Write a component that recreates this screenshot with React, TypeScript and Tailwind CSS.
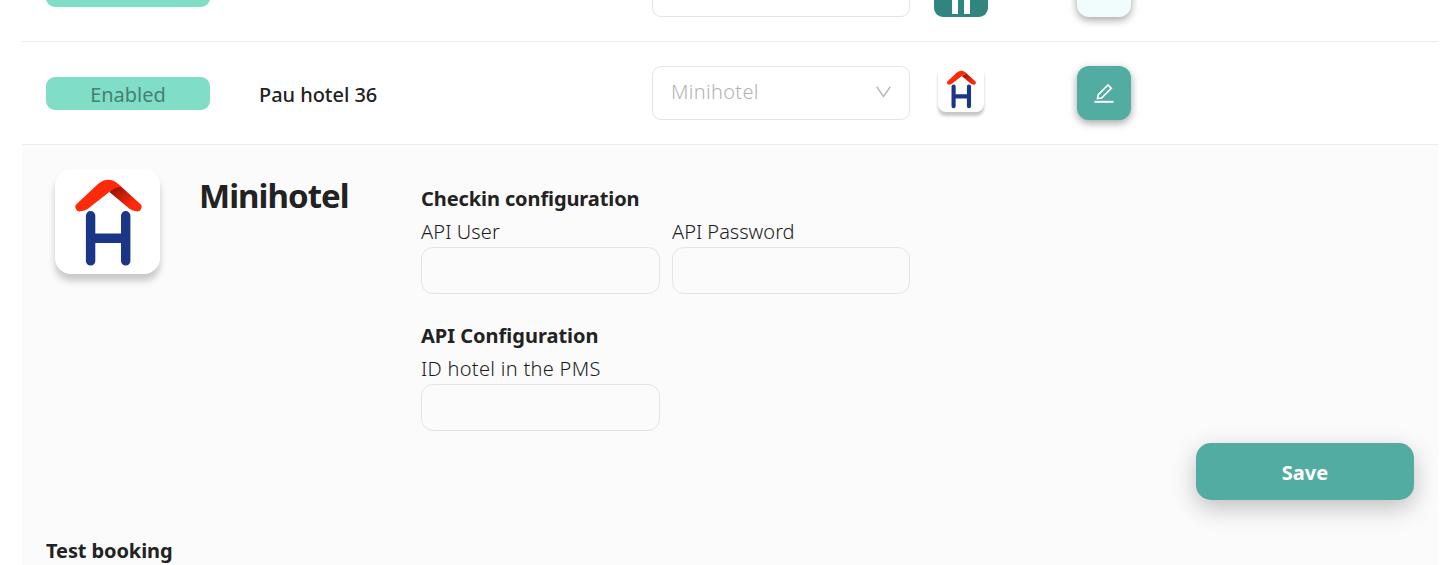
import type { ReactNode } from 'react';

function HotelLogo({ className }: { className: string }) {
  return (
    <svg viewBox="0 0 105 105" className={className} aria-hidden="true">
      <defs>
        <linearGradient id="roofFold" x1="0" y1="0" x2="1" y2="0.8">
          <stop offset="0.15" stopColor="#a11206" />
          <stop offset="0.8" stopColor="#ff2a0a" />
        </linearGradient>
      </defs>
      <path d="M54.300 23 Q58 18 66 17.500 L84.500 34.300 A4.400 4.400 0 0 1 80.500 42.100 Q77.500 42 74.500 39.800 Z" fill="url(#roofFold)" />
      <path d="M22.500 34.300 L43 15 Q54 6 64.500 16 L66.500 17.800 Q60 18 54.300 23 L32.500 40 Q29.500 42.100 26.500 42.100 A4.400 4.400 0 0 1 22.500 34.300 Z" fill="#ff2a0a" />
      <path d="M35.600 46.800 V91.900 M70.700 46.800 V91.900 M35.600 69.200 H70.700" fill="none" stroke="#1b3587" strokeWidth="9.400" strokeLinecap="round" />
    </svg>
  );
}

function Row({ children }: { children: ReactNode }) {
  return <div className="flex h-[103px] shrink-0 items-center border-b border-[#ededed] pl-6">{children}</div>;
}

function Field({ label, labelClass, width }: { label: string; labelClass: string; width: string }) {
  return (
    <label className={`block ${width}`}>
      <span className={`block h-8 whitespace-nowrap pt-px leading-8 font-[330] text-[#1c1c1c] ${labelClass}`}>{label}</span>
      <input className="block h-[47px] w-full rounded-[12px] border border-[#e4e4e4] bg-transparent px-3 outline-none" />
    </label>
  );
}

export default function App() {
  return (
    <main className="h-[565px] overflow-hidden bg-white pl-[22px] font-['Noto_Sans','Open_Sans',sans-serif] text-[20px] text-[#222]">
      <div className="flex h-full w-[1416px] flex-col">
        <div className="flex h-[42px] shrink-0 flex-col justify-end overflow-hidden">
          <Row>
            <div className="h-[33px] w-[164px] rounded-[9px] bg-[#80dec6]" />
            <div className="ml-[442px] h-[54px] w-[258px] rounded-[9px] border border-[#e4e4e4]" />
            <div className="ml-6 flex h-[54px] w-[54px] items-end justify-center gap-[6px] rounded-[9px] bg-[#30857f] pb-[3px]">
              <span className="h-6 w-[6px] bg-white" />
              <span className="h-6 w-[6px] bg-white" />
            </div>
            <div className="ml-[89px] h-[54px] w-[54px] rounded-[12px] bg-[#f0fdfc] shadow-[0_3px_8px_rgba(0,0,0,0.36)]" />
          </Row>
        </div>
        <Row>
          <div className="flex h-[33px] w-[164px] items-center justify-center rounded-[9px] bg-[#80dec6] pt-[3px] text-[20px] text-[#477f72]">
            Enabled
          </div>
          <div className="ml-[49px] w-[393px] pt-[3px] text-[20px] font-medium tracking-[-0.05px]">Pau hotel 36</div>
          <div className="flex h-[54px] w-[258px] items-center justify-between rounded-[9px] border border-[#e4e4e4] pr-[18px] pb-[3px] pl-[18px] font-[330] text-[#b3b3b3]">
            <span className="pt-px tracking-[0.32px]">Minihotel</span>
            <svg viewBox="0 0 15 12" className="h-3 w-[15px]" fill="none" stroke="#b8b8b8" strokeWidth="1.500">
              <path d="M.700 .700 L7.500 10.400 L14.300 .700" />
            </svg>
          </div>
          <div className="mb-2 ml-7 h-[46px] w-[46px] rounded-[8px] bg-white shadow-[0_4px_3px_rgba(0,0,0,0.22)]">
            <HotelLogo className="h-[46px] w-[46px]" />
          </div>
          <button className="ml-[93px] flex h-[54px] w-[54px] items-center justify-center rounded-[12px] bg-[#53aca2] shadow-[0_3px_8px_rgba(0,0,0,0.36)]">
            <svg viewBox="0 0 20 20" className="h-5 w-5" fill="none" stroke="white" strokeWidth="1.700">
              <path d="M3.500 15.600 L4.300 11.700 L14 2 L17.300 5.300 L7.600 15 Z" />
              <path d="M.500 18.800 H19.500" strokeWidth="1.900" />
            </svg>
          </button>
        </Row>
        <section className="flex min-h-0 flex-1 flex-col bg-[#fbfbfb] pt-6 pl-6">
          <div className="flex h-[274px] shrink-0">
            <div className="ml-[9px] h-[105px] w-[105px] shrink-0 rounded-[16px] bg-white shadow-[0_7px_7px_rgba(0,0,0,0.2)]">
              <HotelLogo className="h-[105px] w-[105px]" />
            </div>
            <h1 className="ml-[39px] w-[222px] shrink-0 pt-[5px] text-[33px] leading-[44px] font-bold tracking-[-0.95px]">Minihotel</h1>
            <div className="pt-[14px]">
              <h2 className="h-8 text-[20px] leading-8 font-bold tracking-[-0.1px]">Checkin configuration</h2>
              <div className="flex gap-3">
                <Field label="API User" labelClass="text-[20px] tracking-[0.1px]" width="w-[239px]" />
                <Field label="API Password" labelClass="text-[20px]" width="w-[238px]" />
              </div>
              <h2 className="mt-[26px] h-8 text-[20px] leading-8 font-bold">API Configuration</h2>
              <Field label="ID hotel in the PMS" labelClass="text-[20px] tracking-[0.3px]" width="w-[239px]" />
            </div>
          </div>
          <button className="mr-6 h-[57px] w-[218px] shrink-0 self-end rounded-[15px] bg-[#53aca2] pt-[3px] text-[20px] font-bold text-white shadow-[0_8px_24px_rgba(0,0,0,0.24)]">
            Save
          </button>
          <h2 className="mt-[35px] shrink-0 text-[20px] leading-8 font-bold tracking-[-0.1px]">Test booking</h2>
        </section>
      </div>
    </main>
  );
}
